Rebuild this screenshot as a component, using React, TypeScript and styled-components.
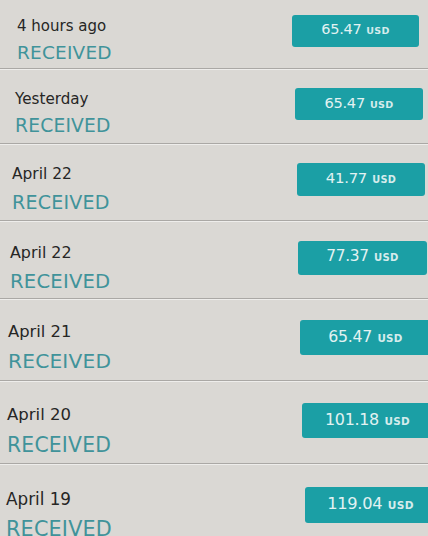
import styled, { createGlobalStyle } from 'styled-components'

const GlobalStyle = createGlobalStyle`
  html, body {
    margin: 0;
    padding: 0;
    width: 428px;
    height: 536px;
    overflow: hidden;
    background: #dad8d4;
    font-family: "DejaVu Sans", "Liberation Sans", sans-serif;
  }
`

const List = styled.div`
  display: flex;
  flex-direction: column;
  width: 428px;
  overflow: hidden;
`

// the photo is taken at a slight angle, so each row gets a bit bigger
const Row = styled.div<{ $h: number; $s: number; $left: number; $top: number }>`
  display: flex;
  justify-content: space-between;
  align-items: flex-start;
  box-sizing: border-box;
  height: ${(p) => p.$h}px;
  padding: ${(p) => p.$top}px 0 0 ${(p) => p.$left}px;
  border-bottom: 1px solid #aaa8a5;
  box-shadow: 0 1px 0 #eeedeb;
  flex-shrink: 0;

  .info {
    display: flex;
    flex-direction: column;
    gap: ${(p) => 7 * p.$s}px;
    margin-top: ${(p) => 2 * p.$s}px;
  }

  .date {
    font-size: ${(p) => 15 * p.$s}px;
    line-height: ${(p) => 18 * p.$s}px;
    color: #262625;
  }

  .status {
    font-size: ${(p) => 18.5 * p.$s}px;
    line-height: ${(p) => 22 * p.$s}px;
    color: #40939a;
    letter-spacing: 0.2px;
  }
`

const Amount = styled.div<{ $s: number; $w: number; $right: number }>`
  display: flex;
  align-items: baseline;
  justify-content: center;
  gap: ${(p) => 5 * p.$s}px;
  width: ${(p) => p.$w}px;
  height: ${(p) => 32 * p.$s}px;
  margin-right: ${(p) => p.$right}px;
  box-sizing: border-box;
  padding-top: ${(p) => 6 * p.$s}px;
  background: #1b9fa5;
  border-radius: 3px;
  color: #e2f2f2;
  flex-shrink: 0;

  .value {
    font-size: ${(p) => 14.5 * p.$s}px;
    letter-spacing: -0.3px;
  }

  .cur {
    font-size: ${(p) => 9.5 * p.$s}px;
    font-weight: bold;
    letter-spacing: 0.3px;
    color: #d5ecec;
  }
`

// right: distance from the page edge (negative = button runs off screen)
const items = [
  { date: '4 hours ago', amount: '65.47', h: 69, top: 15, left: 17, w: 127, right: 9, s: 1 },
  { date: 'Yesterday', amount: '65.47', h: 75, top: 19, left: 15, w: 128, right: 5, s: 1.01 },
  { date: 'April 22', amount: '41.77', h: 77, top: 19, left: 12, w: 128, right: 3, s: 1.03 },
  { date: 'April 22', amount: '77.37', h: 78, top: 20, left: 10, w: 129, right: 1, s: 1.06 },
  { date: 'April 21', amount: '65.47', h: 82, top: 21, left: 8, w: 131, right: -3, s: 1.09 },
  { date: 'April 20', amount: '101.18', h: 83, top: 22, left: 7, w: 131, right: -5, s: 1.1 },
  { date: 'April 19', amount: '119.04', h: 84, top: 23, left: 6, w: 131, right: -8, s: 1.12 },
]

export default function App() {
  return (
    <>
      <GlobalStyle />
      <List>
        {items.map((it, i) => (
          <Row key={i} $h={it.h} $s={it.s} $left={it.left} $top={it.top}>
            <div className="info">
              <span className="date">{it.date}</span>
              <span className="status">RECEIVED</span>
            </div>
            <Amount $s={it.s} $w={it.w} $right={it.right}>
              <span className="value">{it.amount}</span>
              <span className="cur">USD</span>
            </Amount>
          </Row>
        ))}
      </List>
    </>
  )
}
